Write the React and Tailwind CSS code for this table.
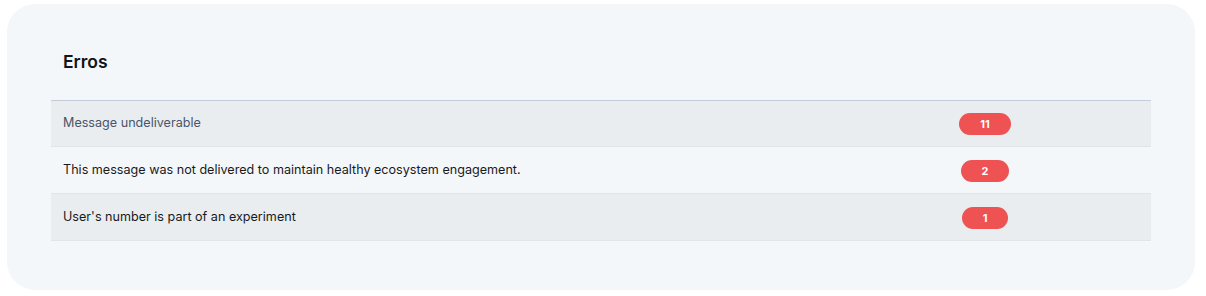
export default function App() {
  const rows = [
    { label: "Message undeliverable", count: 11, muted: true, h: "h-[46px]" },
    { label: "This message was not delivered to maintain healthy ecosystem engagement.", count: 2, h: "h-[47px]" },
    { label: "User's number is part of an experiment", count: 1, h: "h-[47px]" },
  ];

  return (
    <div className="bg-white w-[1206px] h-[296px] pt-[4px] pl-[7px]" style={{ fontFamily: "Inter, 'Noto Sans', sans-serif" }}>
      <div className="w-[1188px] h-[286px] bg-[#f4f7fa] rounded-[28px] pt-[46px] px-[44px]">
        <h2 className="pl-[12px] text-[17.5px] leading-[24px] font-semibold text-[#111418] mb-[26px]">Erros</h2>

        <div className="border-t border-[#c3ccda]">
          {rows.map((row, i) => (
            <div
              key={i}
              className={`flex items-center ${row.h} border-b border-[#e1e5ea] ${
                i % 2 === 0 ? "bg-[#e9edf0]" : "bg-[#f4f7fa]"
              }`}
            >
              <div
                className={`flex-1 pl-[12px] text-[12.6px] ${
                  row.muted ? "text-[#4a5568]" : "text-[#1a1a1a]"
                }`}
              >
                {row.label}
              </div>
              <div className="w-[140px] flex justify-center mr-[96px] pt-[1px]">
                <span className="bg-[#ee5253] text-white text-[11px] font-bold leading-[22px] h-[22px] px-[21px] rounded-full">
                  {row.count}
                </span>
              </div>
            </div>
          ))}
        </div>
      </div>
    </div>
  );
}
